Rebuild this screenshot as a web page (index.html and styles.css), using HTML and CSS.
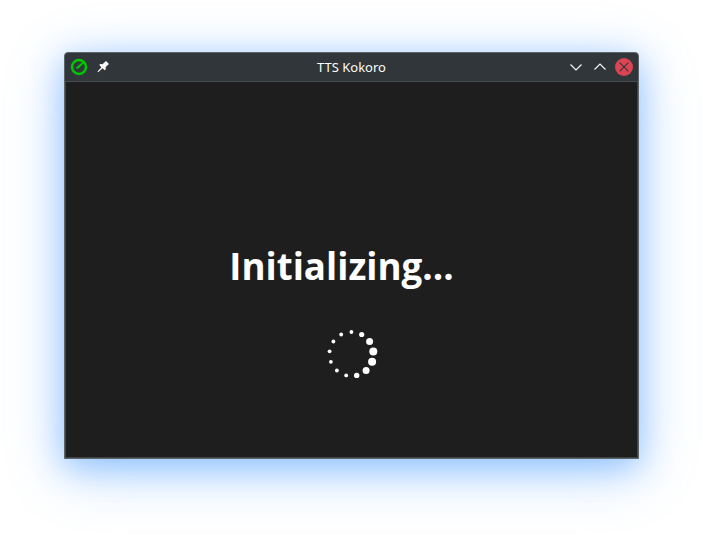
FILE: index.html
```html
<!DOCTYPE html>
<html lang="en">
<head>
<meta charset="utf-8">
<title>TTS Kokoro</title>
<link rel="stylesheet" href="styles.css">
</head>
<body>
<div class="window">
  <header class="titlebar">
    <div class="group">
      <svg class="app-icon" width="18" height="18" viewBox="0 0 18 18"><circle cx="9" cy="9" r="7" fill="none" stroke="#00c800" stroke-width="2.500"/><path d="M13.200 3.600 14.200 4.800 8.600 10.500H6V9.400Z" fill="#00c800"/></svg>
      <svg class="pin" width="18" height="18" viewBox="0 0 18 18"><path d="M12 3 15 6 13.800 7 11.600 9.300 11.700 11.400 10.800 12.300 8.500 10.300 4.200 14.300 3.500 13.600 7.400 9.200 5.300 7 6.200 6.100 8.500 6.300 10.900 4.100Z" fill="#fcfcfc"/></svg>
    </div>
    <h1 class="title">TTS Kokoro</h1>
    <div class="group controls">
      <svg width="18" height="18" viewBox="0 0 18 18"><path d="M3.500 6.500 9 12l5.500-5.500" fill="none" stroke="#fcfcfc" stroke-width="1.100"/></svg>
      <svg width="18" height="18" viewBox="0 0 18 18"><path d="M3.500 11.500 9 6l5.500 5.500" fill="none" stroke="#fcfcfc" stroke-width="1.100"/></svg>
      <svg width="18" height="18" viewBox="0 0 18 18"><circle cx="9" cy="9" r="9" fill="#da4453"/><path d="m4.700 4.700 8.600 8.600m0-8.600-8.600 8.600" fill="none" stroke="#31363b" stroke-width="1.100"/></svg>
    </div>
  </header>
  <main class="content">
    <p class="status">Initializing...</p>
    <svg class="spinner" width="52" height="52" viewBox="326 328 52 52" fill="#fff">
      <circle cx="351.400" cy="332" r="1.900"/><circle cx="361.700" cy="334.500" r="2.600"/>
      <circle cx="369.600" cy="341.500" r="3.500"/><circle cx="373.300" cy="351.400" r="4"/>
      <circle cx="372.100" cy="361.800" r="4"/><circle cx="366.100" cy="370.500" r="3.500"/>
      <circle cx="356.700" cy="375.400" r="2.700"/><circle cx="346.200" cy="375.400" r="1.900"/>
      <circle cx="336.900" cy="370.500" r="1.900"/><circle cx="330.900" cy="361.800" r="1.900"/>
      <circle cx="329.600" cy="351.300" r="1.900"/><circle cx="333.400" cy="341.500" r="1.900"/>
      <circle cx="341.200" cy="334.500" r="1.900"/>
    </svg>
  </main>
</div>
</body>
</html>
```
FILE: styles.css
```css
* { box-sizing: border-box; }
body {
  margin: 0;
  height: 535px;
  padding: 52px 64px 76px;
  background: #fff;
  font-family: "Noto Sans", sans-serif;
  overflow: hidden;
}
.window {
  height: 407px;
  display: flex;
  flex-direction: column;
  border: 1px solid #5d6468;
  border-radius: 4px 4px 0 0;
  background: #31363b;
  box-shadow: 0 12px 60px rgba(61, 148, 255, .32), 0 8px 32px rgba(61, 148, 255, .44);
}
.titlebar {
  height: 29px;
  flex: none;
  display: grid;
  grid-template-columns: 1fr auto 1fr;
  align-items: center;
  padding: 0 5px;
  border-bottom: 1px solid #484d50;
}
.group { display: flex; gap: 6px; }
.controls { justify-content: flex-end; }
.title {
  margin: 0;
  font-size: 13px;
  font-weight: 400;
  line-height: 18px;
  color: #fcfcfc;
}
.content {
  flex: 1;
  display: flex;
  flex-direction: column;
  align-items: center;
  padding-top: 157px;
  border: 1px solid #404344;
  border-top: 0;
  background: #1e1e1e;
}
.status {
  margin: 0 20px 35px 0;
  font-family: "Open Sans", "Noto Sans", sans-serif;
  font-size: 36.7px;
  font-weight: 700;
  line-height: 54px;
  color: #fff;
}
```
